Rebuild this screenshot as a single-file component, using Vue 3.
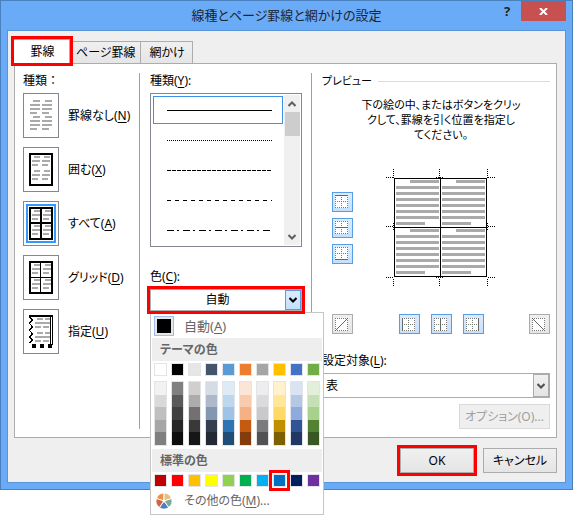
<template>
    <div class="screen">
        <div class="dialog" role="dialog" aria-labelledby="dialog-title">
            <header class="title-bar">
                <h1 id="dialog-title">線種とページ罫線と網かけの設定</h1>
                <div class="window-buttons">
                    <button type="button" class="btn-help" aria-label="ヘルプ">?</button>
                    <button type="button" class="btn-close" aria-label="閉じる">
                        <svg width="9" height="7" viewBox="0 0 9 7">
                            <path d="M1 0L8 7M8 0L1 7" stroke="#fff" stroke-width="2" />
                        </svg>
                    </button>
                </div>
            </header>

            <main class="client">
                <nav class="tabs" role="tablist">
                    <button
                        v-for="tab in tabs"
                        :key="tab"
                        type="button"
                        role="tab"
                        class="tab"
                        :class="{ active: tab === activeTab }"
                        :aria-selected="tab === activeTab"
                        @click="activeTab = tab"
                    >
                        {{ tab }}
                    </button>
                </nav>

                <div class="panel">
                    <!-- Border presets -->
                    <section class="column presets">
                        <h2 class="caption">種類：</h2>
                        <div class="preset-list">
                            <button
                                v-for="preset in presets"
                                :key="preset.id"
                                type="button"
                                class="preset"
                                :aria-pressed="preset.id === activePreset"
                                @click="activePreset = preset.id"
                            >
                                <svg width="36" height="45" viewBox="0 0 36 45" shape-rendering="crispEdges">
                                    <rect x="0.5" y="0.5" width="35" height="44" fill="#fff" stroke="#828790" />
                                    <rect v-if="preset.id === activePreset" x="4" y="4" width="28" height="37" fill="none" stroke="#3399ff" stroke-width="2" />
                                    <path :d="preset.bars" stroke="#aaa" stroke-width="2" />
                                    <rect v-if="preset.frame" x="7" y="7" width="22" height="31" fill="none" stroke="#000" stroke-width="2" />
                                    <path v-if="preset.id === 'all'" d="M18 6V39M6 22H30" stroke="#000" stroke-width="2" />
                                    <path v-if="preset.id === 'grid'" d="M17.5 6V39M6 22.5H30" stroke="#000" />
                                    <template v-if="preset.id === 'custom'">
                                        <path d="M6 7H30" stroke="#000" stroke-width="2" />
                                        <path d="M27.5 8V35M29.5 8V36" stroke="#000" />
                                        <path d="M6.5 8L9.5 11L6.5 14L9.5 18L6.5 21L9.5 25L6.5 28L9.5 31L6.5 34" fill="none" stroke="#000" />
                                        <path d="M9 37H13M17 37H21M25 37H29" stroke="#000" stroke-width="4" />
                                    </template>
                                </svg>
                                <span>{{ preset.label }}(<u>{{ preset.key }}</u>)</span>
                            </button>
                        </div>
                    </section>

                    <!-- Line style and color -->
                    <section class="column line-style">
                        <h2 id="style-caption" class="caption">種類(<u>Y</u>):</h2>
                        <div class="listbox">
                            <div class="options" role="listbox" aria-labelledby="style-caption">
                                <button
                                    v-for="(dash, i) in lineStyles"
                                    :key="i"
                                    type="button"
                                    role="option"
                                    class="option"
                                    :class="{ selected: i === activeLine }"
                                    :aria-selected="i === activeLine"
                                    @click="activeLine = i"
                                >
                                    <svg width="105" height="1" viewBox="0 0 105 1" shape-rendering="crispEdges">
                                        <path d="M0 0.5H105" stroke="#000" :stroke-dasharray="dash" />
                                    </svg>
                                </button>
                            </div>
                            <div class="scrollbar">
                                <svg width="8" height="6" viewBox="0 0 8 6"><path d="M0.5 5L4 1.5L7.5 5" fill="none" stroke="#606060" stroke-width="2" /></svg>
                                <span class="thumb"></span>
                                <svg width="8" height="6" viewBox="0 0 8 6"><path d="M0.5 1L4 4.5L7.5 1" fill="none" stroke="#606060" stroke-width="2" /></svg>
                            </div>
                        </div>

                        <label class="caption" for="line-color">色(<u>C</u>):</label>
                        <div class="color-field">
                            <div class="combo marked">
                                <select id="line-color">
                                    <option>自動</option>
                                </select>
                                <span class="arrow hot">
                                    <svg width="8" height="6" viewBox="0 0 8 6"><path d="M0.5 1L4 4.5L7.5 1" fill="none" stroke="#000" stroke-width="2" /></svg>
                                </span>
                            </div>

                            <div class="color-menu">
                                <button type="button" class="menu-row auto">
                                    <span class="auto-swatch"></span>
                                    <span>自動(<u>A</u>)</span>
                                </button>
                                <h3>テーマの色</h3>
                                <div class="swatches">
                                    <button
                                        v-for="color in themeColors"
                                        :key="color"
                                        type="button"
                                        class="swatch"
                                        :aria-label="color"
                                        :style="{ background: color }"
                                    ></button>
                                </div>
                                <div class="swatches shades">
                                    <div v-for="(column, c) in themeShades" :key="c" class="shade-column">
                                        <button
                                            v-for="color in column"
                                            :key="color"
                                            type="button"
                                            class="shade"
                                            :aria-label="color"
                                            :style="{ background: color }"
                                        ></button>
                                    </div>
                                </div>
                                <h3>標準の色</h3>
                                <div class="swatches">
                                    <button
                                        v-for="color in standardColors"
                                        :key="color"
                                        type="button"
                                        class="swatch"
                                        :class="{ marked: color === pickedColor }"
                                        :aria-label="color"
                                        :style="{ background: color }"
                                        @click="pickedColor = color"
                                    ></button>
                                </div>
                                <button type="button" class="menu-row more">
                                    <svg width="16" height="16" viewBox="0 0 16 16" stroke="#fff" stroke-width="1">
                                        <path d="M8 8L8 0A8 8 0 0 0 0.4 5.5Z" fill="#e8924a" />
                                        <path d="M8 8L15.6 5.5A8 8 0 0 0 8 0Z" fill="#e9c083" />
                                        <path d="M8 8L12.7 14.5A8 8 0 0 0 15.6 5.5Z" fill="#7ba89c" />
                                        <path d="M8 8L3.3 14.5A8 8 0 0 0 12.7 14.5Z" fill="#4a7fc0" />
                                        <path d="M8 8L0.4 5.5A8 8 0 0 0 3.3 14.5Z" fill="#d4633f" />
                                        <circle cx="8" cy="8" r="1" fill="#fff" />
                                    </svg>
                                    <span>その他の色(<u>M</u>)...</span>
                                </button>
                            </div>
                        </div>
                    </section>

                    <!-- Preview -->
                    <section class="column preview">
                        <h2 class="caption legend">プレビュー</h2>
                        <div class="preview-body">
                            <p>下の絵の中、またはボタンをクリッ<br />クして、罫線を引く位置を指定し<br />てください。</p>
                            <div class="preview-row">
                                <div class="side-buttons">
                                    <button v-for="edge in sideEdges" :key="edge.name" type="button" class="edge on" :aria-label="edge.name">
                                        <svg width="13" height="13" viewBox="0 0 13 13" shape-rendering="crispEdges">
                                            <rect width="13" height="13" fill="#fff" />
                                            <path :d="dottedGrid" fill="none" stroke="#777" stroke-dasharray="1 1" />
                                            <path :d="edge.line" stroke="#666" />
                                        </svg>
                                    </button>
                                </div>
                                <svg width="110" height="119" viewBox="0 0 110 119" shape-rendering="crispEdges">
                                    <path :d="cropMarks" stroke="#000" stroke-dasharray="1 1" />
                                    <path :d="previewBars" stroke="#aaa" stroke-width="3" />
                                    <path d="M8.5 10.5H100.5V108.5H8.5ZM54.5 10V109M8 59.5H101" fill="none" stroke="#000" />
                                </svg>
                            </div>
                            <div class="bottom-buttons">
                                <div v-for="(group, g) in bottomEdges" :key="g" class="edge-group">
                                    <button
                                        v-for="edge in group"
                                        :key="edge.name"
                                        type="button"
                                        class="edge"
                                        :class="{ on: edge.on }"
                                        :aria-label="edge.name"
                                    >
                                        <svg width="13" height="13" viewBox="0 0 13 13">
                                            <rect width="13" height="13" fill="#fff" />
                                            <path :d="edge.on ? dottedGrid : dottedBox" fill="none" stroke="#777" stroke-dasharray="1 1" shape-rendering="crispEdges" />
                                            <path :d="edge.line" stroke="#666" />
                                        </svg>
                                    </button>
                                </div>
                            </div>
                        </div>
                        <label class="caption" for="apply-to">設定対象(<u>L</u>):</label>
                        <div class="combo apply">
                            <select id="apply-to">
                                <option>表</option>
                            </select>
                            <span class="arrow">
                                <svg width="8" height="6" viewBox="0 0 8 6"><path d="M0.5 1L4 4.5L7.5 1" fill="none" stroke="#505050" stroke-width="2" /></svg>
                            </span>
                        </div>
                        <button type="button" class="btn btn-options" disabled>オプション(O)...</button>
                    </section>
                </div>

                <footer class="actions">
                    <button type="button" class="btn marked">OK</button>
                    <button type="button" class="btn">キャンセル</button>
                </footer>
            </main>
        </div>
    </div>
</template>

<script setup>
import { ref } from 'vue'

const tabs = ['罫線', 'ページ罫線', '網かけ']
const activeTab = ref('罫線')
const activePreset = ref('all')
const activeLine = ref(0)
const pickedColor = ref('#0070c0')

// Gray text lines inside the preset thumbnails
const half = (y, a, b) => `M${a + 2} ${y}H${a + 8}M${b + 2} ${y}H${b + 8}M${a} ${y + 4}H${a + 8}M${b} ${y + 4}H${b + 8}M${a} ${y + 8}H${a + 6}M${b} ${y + 8}H${b + 6}`
const paragraph = (y) => `M10 ${y}H17M22 ${y}H29M7 ${y + 4}H17M19 ${y + 4}H29M7 ${y + 8}H17M19 ${y + 8}H29M7 ${y + 12}H14M19 ${y + 12}H26`
const boxBars = half(10, 9, 19) + half(24, 9, 19)
const cellBars = half(10, 9, 20) + half(25, 9, 20)

const presets = [
    { id: 'none', label: '罫線なし', key: 'N', bars: paragraph(8) + paragraph(24) },
    { id: 'box', label: '囲む', key: 'X', bars: boxBars, frame: true },
    { id: 'all', label: 'すべて', key: 'A', bars: cellBars, frame: true },
    { id: 'grid', label: 'グリッド', key: 'D', bars: cellBars, frame: true },
    { id: 'custom', label: '指定', key: 'U', bars: half(10, 12, 20) + half(24, 12, 20) }
]

const lineStyles = ['none', '1 1', '4 1', '4 4', '7 3 2 4']

const themeColors = ['#ffffff', '#000000', '#e7e6e6', '#44546a', '#5b9bd5', '#ed7d31', '#a5a5a5', '#ffc000', '#4472c4', '#70ad47']
const themeShades = [
    ['#f2f2f2', '#d9d9d9', '#bfbfbf', '#a6a6a6', '#7f7f7f'],
    ['#7f7f7f', '#595959', '#404040', '#262626', '#0d0d0d'],
    ['#d0cece', '#aeabab', '#757070', '#3a3838', '#171616'],
    ['#d6dce5', '#adb9ca', '#8497b0', '#333f50', '#222a35'],
    ['#deebf7', '#bdd7ee', '#9dc3e6', '#2e75b6', '#1f4e79'],
    ['#fbe5d6', '#f8cbad', '#f4b183', '#c55a11', '#843c0c'],
    ['#ededed', '#dbdbdb', '#c9c9c9', '#7b7b7b', '#525252'],
    ['#fff2cc', '#ffe699', '#ffd966', '#bf9000', '#7f6000'],
    ['#dae3f3', '#b4c7e7', '#8faadc', '#2f5597', '#203864'],
    ['#e2f0d9', '#c5e0b4', '#a9d18e', '#548235', '#385723']
]
const standardColors = ['#c00000', '#ff0000', '#ffc000', '#ffff00', '#92d050', '#00b050', '#00b0f0', '#0070c0', '#002060', '#7030a0']

const dottedBox = 'M0 0.5H13M0 12.5H13M0.5 0V13M12.5 0V13'
const dottedGrid = dottedBox + 'M0 6.5H13M6.5 0V13'

const sideEdges = [
    { name: '上罫線', line: 'M0 0.5H13' },
    { name: '横罫線', line: 'M0 6.5H13' },
    { name: '下罫線', line: 'M0 12.5H13' }
]
const bottomEdges = [
    [{ name: '右上がり', line: 'M0 13L13 0' }],
    [
        { name: '左罫線', line: 'M0.5 0V13', on: true },
        { name: '縦罫線', line: 'M6.5 0V13', on: true },
        { name: '右罫線', line: 'M12.5 0V13', on: true }
    ],
    [{ name: '右下がり', line: 'M0 0L13 13' }]
]

// Crop marks around the preview table
const cropMarks = [
    'M0 9.5H7M50 9.5H57M102 9.5H109',
    'M0 58.5H7M102 58.5H109',
    'M0 109.5H7M50 109.5H57M102 109.5H109',
    'M7.5 1V10M53.5 1V10M101.5 1V10',
    'M7.5 55V62M101.5 55V62',
    'M7.5 111V118M53.5 111V118M101.5 111V118'
].join('')

// Eight text lines per cell, first one indented, last one short
const previewBars = [0, 49].flatMap((top) => [0, 46].flatMap((left) =>
    Array.from({ length: 8 }, (_, i) => {
        const start = left + (i === 0 ? 24 : 10)
        const end = left + (i === 7 ? 39 : 53)
        return `M${start} ${top + 13.5 + i * 6}H${end}`
    })
)).join('')
</script>

<style>
body {
    margin: 0;
    background: #fff;
}
</style>

<style scoped>
/* room for the open color menu, which hangs below the dialog */
.screen {
    padding-bottom: 25px;
}

.dialog {
    box-sizing: border-box;
    padding: 0 6px 6px;
    border: 1px solid #4a80be;
    background: #6aabf7;
    font-family: "Noto Sans", "Noto Sans CJK JP", sans-serif;
    font-size: 12px;
    line-height: 16px;
    font-feature-settings: "palt";
    color: #000;
}

.dialog * {
    box-sizing: border-box;
}

button,
select {
    margin: 0;
    padding: 0;
    border: none;
    background: none;
    color: inherit;
    font: inherit;
    font-feature-settings: inherit;
}

svg {
    display: block;
    flex: none;
}

u {
    text-underline-offset: 2px;
}

.title-bar {
    display: grid;
    grid-template-columns: 1fr auto 1fr;
    height: 29px;
}

.title-bar h1 {
    grid-column: 2;
    margin: 0;
    font-size: 13px;
    font-weight: 400;
    line-height: 29px;
    color: #1c2433;
}

.window-buttons {
    display: flex;
    justify-self: end;
    height: 20px;
}

.btn-help {
    width: 28px;
    font-size: 13px;
    font-weight: 700;
    color: #222;
}

.btn-close {
    display: flex;
    align-items: center;
    justify-content: center;
    width: 45px;
    background: #c75050;
}

.client {
    padding: 8px 8px 9px 6px;
    border: 1px solid #5a94d8;
    background: #efefef;
}

.tabs {
    display: flex;
    align-items: flex-end;
    height: 24px;
}

.tab {
    min-width: 52px;
    height: 22px;
    padding: 0 4px 0 6px;
    border: 1px solid #acacac;
    border-bottom: none;
    border-left: none;
    background: linear-gradient(#f0f0f0, #e5e5e5);
}

.tab.active {
    z-index: 1;
    width: 56px;
    height: 24px;
    background: #fff;
    outline: 3px solid #f00;
}

.panel {
    display: grid;
    grid-template-columns: 125px 172px 1fr;
    padding: 9px 0 8px;
    border: 1px solid #acacac;
    background: #fff;
}

.column {
    display: flex;
    flex-direction: column;
    min-width: 0;
}

.presets {
    padding-left: 8px;
    border-right: 1px solid #a0a0a0;
}

.presets .caption {
    font-feature-settings: normal;
}

.line-style {
    padding: 0 9px 0 10px;
    border-right: 1px solid #a0a0a0;
}

.preview {
    padding: 0 6px 0 10px;
}

.caption {
    margin: 0 0 4px;
    font-size: 12px;
    font-weight: 400;
    line-height: 16px;
}

.preset-list {
    display: flex;
    flex-direction: column;
    gap: 9px;
}

.preset {
    display: flex;
    align-items: center;
    gap: 9px;
    white-space: nowrap;
}

.listbox {
    display: flex;
    height: 154px;
    margin-bottom: 22px;
    padding: 1px;
    border: 1px solid #828790;
}

.options {
    flex: 1;
    padding: 1px;
    overflow: hidden;
}

.option {
    display: flex;
    align-items: center;
    justify-content: flex-end;
    width: 100%;
    height: 28px;
    margin-bottom: 2px;
    padding-right: 10px;
    border: 1px solid transparent;
}

.option.selected {
    border-color: #3c91ea;
}

.scrollbar {
    display: flex;
    flex-direction: column;
    align-items: center;
    width: 16px;
    padding: 6px 0 5px;
    background: #f0f0f0;
}

.thumb {
    width: 15px;
    height: 24px;
    margin: 5px 0 auto;
    background: #cdcdcd;
}

.combo {
    display: flex;
    height: 22px;
    border: 1px solid #acacac;
    position: relative;
    background: #fff;
}

.combo select {
    flex: 1;
    appearance: none;
    padding-right: 17px;
    text-align-last: center;
}

.arrow {
    position: absolute;
    top: 0;
    right: 0;
    bottom: 0;
    display: flex;
    align-items: center;
    justify-content: center;
    width: 16px;
    border: 1px solid #acacac;
    background: linear-gradient(#f0f0f0, #e5e5e5);
    pointer-events: none;
}

.arrow.hot {
    border-color: #569de5;
    background: linear-gradient(#dcecfc, #c4e0fc);
}

.marked {
    outline: 3px solid #f00;
}

.color-field {
    position: relative;
}

.color-menu {
    position: absolute;
    z-index: 2;
    top: 100%;
    left: 0;
    width: 174px;
    margin-top: 1px;
    padding: 3px 1px 5px;
    border: 1px solid #c6c6c6;
    background: #fff;
    font-size: 13px;
    color: #666;
}

/* keeps the marker frame of the combo above the menu's edge */
.combo.marked {
    z-index: 3;
}

.color-menu h3 {
    margin: 0 0 2px;
    padding-left: 8px;
    background: #eee;
    font-size: 12px;
    font-weight: 700;
    line-height: 23px;
}

.menu-row {
    display: flex;
    align-items: center;
    width: 100%;
    padding-left: 2px;
}

.auto {
    gap: 10px;
    height: 20px;
    margin-bottom: 2px;
}

.auto-swatch {
    width: 20px;
    height: 20px;
    padding: 2px;
    border: 1px solid #a3bde3;
    background: #000 content-box;
    box-shadow: inset 0 0 0 2px #e4e7ec;
}

.more {
    gap: 12px;
    height: 17px;
    padding-left: 4px;
    font-size: 12px;
}

.swatches {
    display: flex;
    gap: 4px;
    margin-bottom: 5px;
    padding-left: 2px;
}

.shades {
    margin-bottom: 3px;
}

.swatch {
    width: 13px;
    height: 13px;
    border: 1px solid #e2e4e7;
}

.swatch.marked {
    z-index: 1;
    outline-offset: 1px;
}

.shade-column {
    display: flex;
    flex-direction: column;
    width: 13px;
    height: 65px;
    border: 1px solid #e2e4e7;
}

.shade {
    flex: 1;
}

.legend {
    display: flex;
    align-items: center;
    gap: 6px;
    margin-bottom: 8px;
    font-size: 11px;
}

.legend::after {
    content: "";
    flex: 1;
    height: 1px;
    background: #dcdcdc;
}

.preview-body {
    padding-left: 10px;
    margin-bottom: 19px;
}

.preview-body p {
    margin: 0 0 26px;
    font-size: 11px;
    line-height: 15px;
    text-align: center;
    white-space: nowrap;
}

.preview-row {
    display: flex;
    align-items: center;
    gap: 33px;
    margin-bottom: 27px;
}

.side-buttons {
    display: flex;
    flex-direction: column;
    gap: 6px;
}

.bottom-buttons {
    display: flex;
    justify-content: space-between;
}

.edge-group {
    display: flex;
    gap: 11px;
}

.edge {
    width: 21px;
    height: 20px;
    padding: 2px;
    border: 1px solid #acacac;
    background: linear-gradient(#f0f0f0, #e5e5e5);
}

.edge.on {
    border-color: #569de5;
    background: linear-gradient(#dcecfc, #c4e0fc);
}

.apply {
    height: 25px;
    margin-bottom: 6px;
}

.apply select {
    padding-left: 3px;
    text-align-last: left;
}

.btn {
    height: 25px;
    min-width: 74px;
    border: 1px solid #acacac;
    background: linear-gradient(#f0f0f0, #e5e5e5);
}

.btn-options {
    align-self: flex-end;
    width: 91px;
    border-color: #d9d9d9;
    background: #efefef;
    color: #a0a0a0;
}

.actions {
    display: flex;
    justify-content: flex-end;
    gap: 9px;
    padding-top: 10px;
}
</style>
